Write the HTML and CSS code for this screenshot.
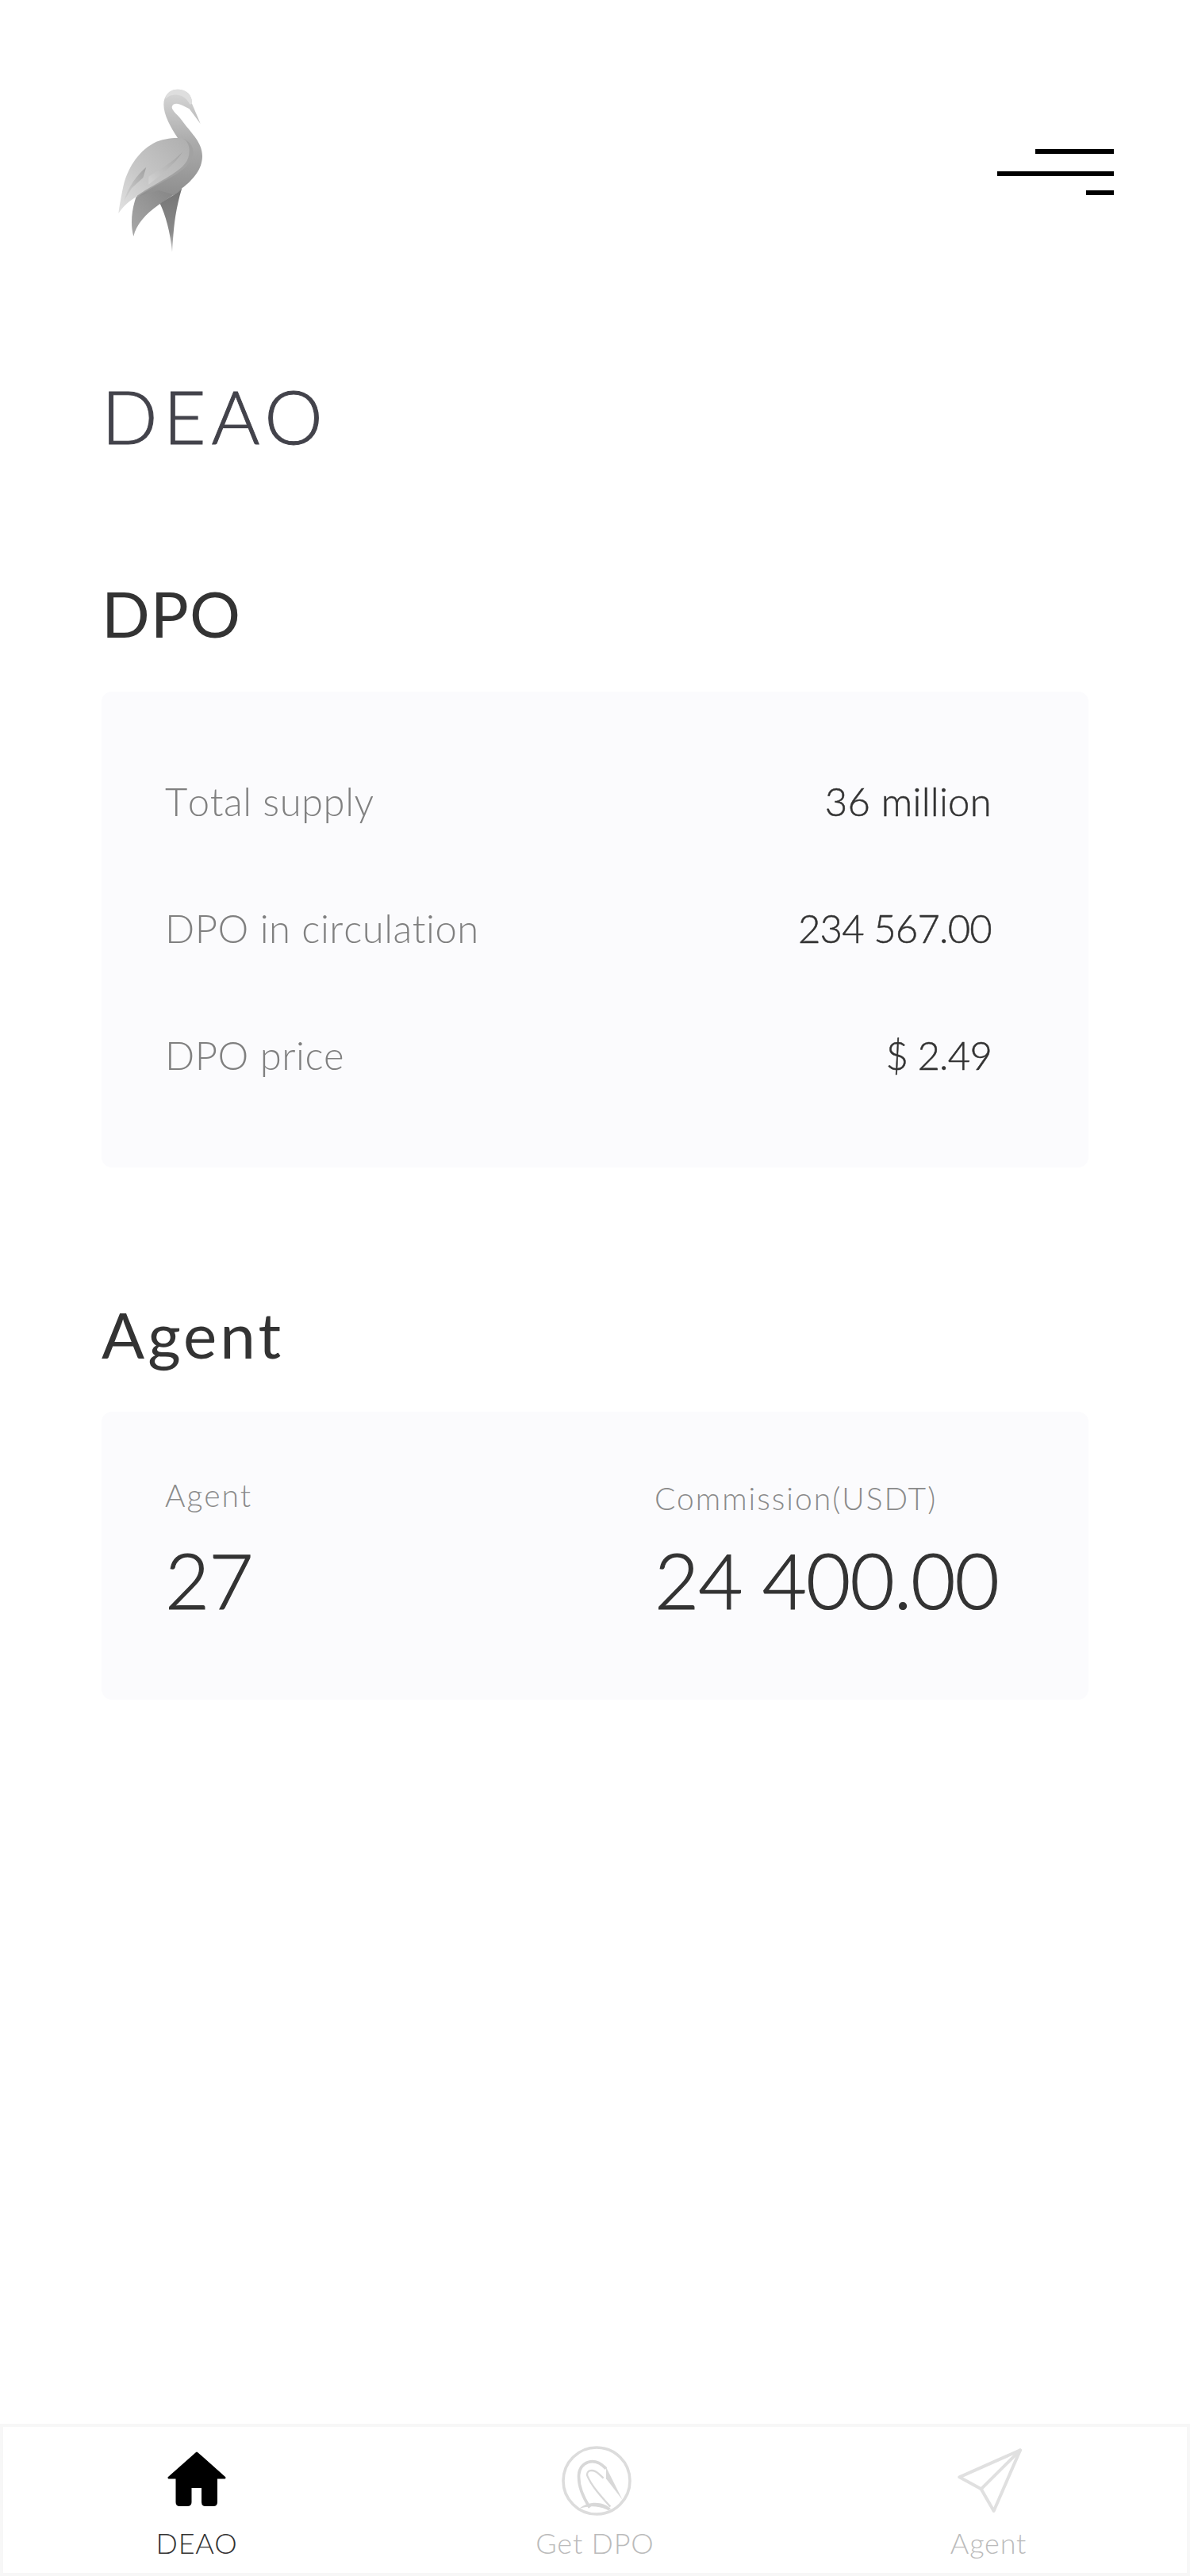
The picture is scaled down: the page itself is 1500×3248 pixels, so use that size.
FILE: index.html
```html
<!DOCTYPE html>
<html>
<head>
    <title>DEAO</title>
    <link rel="stylesheet" href="styles.css">
</head>
<body>
    <header class="header">
        <svg class="logo" viewBox="0 0 660 780">
            <defs>
                <linearGradient id="neck" x1="0" y1="0" x2="0" y2="1">
                    <stop offset="0" stop-color="#d8d8d8"/>
                    <stop offset="0.45" stop-color="#acacac"/>
                    <stop offset="1" stop-color="#8a8a8a"/>
                </linearGradient>
                <linearGradient id="wing" x1="1" y1="0" x2="0" y2="1">
                    <stop offset="0" stop-color="#aeaeae"/>
                    <stop offset="0.6" stop-color="#c8c8c8"/>
                    <stop offset="1" stop-color="#e2e2e2"/>
                </linearGradient>
                <linearGradient id="tail" x1="1" y1="0" x2="0" y2="1">
                    <stop offset="0" stop-color="#868686"/>
                    <stop offset="1" stop-color="#a8a8a8"/>
                </linearGradient>
                <linearGradient id="leg" x1="0" y1="0" x2="0" y2="1">
                    <stop offset="0" stop-color="#747474"/>
                    <stop offset="0.7" stop-color="#8a8a8a"/>
                    <stop offset="1" stop-color="#d0d0d0"/>
                </linearGradient>
                <linearGradient id="notch" x1="1" y1="0" x2="0" y2="1">
                    <stop offset="0" stop-color="#a0a0a0"/>
                    <stop offset="1" stop-color="#d4d4d4"/>
                </linearGradient>
            </defs>
            <path fill="url(#neck)" d="M372 98C340 98 319 122 319 155C319 195 345 240 372 282L300 400L218 505L300 530L345 505C360 495 375 490 388 472C430 440 465 400 465 350C465 300 425 265 395 225C375 195 350 180 350 165C352 150 372 148 392 160L416 172L458 228L426 152C428 120 405 98 372 98Z"/>
            <path fill="#dedede" d="M372 98C345 98 330 112 325 135C345 112 395 108 418 155L426 152C428 120 405 98 372 98Z"/>
            <path fill="url(#tail)" d="M215 505C198 550 192 610 205 654C215 610 250 570 300 535C320 520 345 505 352 495L300 480Z"/>
            <path fill="url(#leg)" d="M305 530C325 570 345 640 351 714C356 640 358 570 388 472C370 495 340 505 305 530Z"/>
            <path fill="#a2a2a2" d="M392 284C418 296 434 315 430 345C422 382 395 400 365 420C310 452 255 478 212 512L250 440L380 330Z"/>
            <path fill="url(#wing)" d="M392 284C370 280 320 282 280 302C220 335 180 400 165 470C158 505 152 535 148 567C170 535 190 520 212 506C240 480 310 448 360 413C390 393 416 372 416 330C416 310 408 292 392 284Z"/>
            <path fill="url(#notch)" d="M253 392L241 432L198 472L168 522C185 465 220 420 253 392Z"/>
            <path fill="url(#notch)" d="M390 335C358 385 310 420 262 458L262 428C305 400 350 375 390 335Z"/>
        </svg>
        <svg class="menu" viewBox="0 0 147 58">
            <rect x="48" y="0" width="99" height="6"/>
            <rect x="0" y="28" width="147" height="6"/>
            <rect x="112" y="52" width="35" height="6"/>
        </svg>
    </header>

    <main class="content">
        <h1 class="page-title">DEAO</h1>

        <h2 class="section-title first">DPO</h2>
        <div class="card list-card">
            <div class="row">
                <span class="row-label">Total supply</span>
                <span class="row-value">36 million</span>
            </div>
            <div class="row">
                <span class="row-label">DPO in circulation</span>
                <span class="row-value num">234 567.00</span>
            </div>
            <div class="row">
                <span class="row-label">DPO price</span>
                <span class="row-value num">$ 2.49</span>
            </div>
        </div>

        <h2 class="section-title second">Agent</h2>
        <div class="card stats-card">
            <div class="stat">
                <div class="stat-label">Agent</div>
                <div class="stat-value">27</div>
            </div>
            <div class="stat">
                <div class="stat-label low">Commission(USDT)</div>
                <div class="stat-value">24 400.00</div>
            </div>
        </div>
    </main>

    <nav class="tabbar">
        <a class="tab active">
            <svg class="tab-icon" viewBox="0 0 100 100">
                <path d="M50 11L15 42H85Z" stroke="#000" stroke-width="3" stroke-linejoin="round"/>
                <path d="M23.5 36V73Q23.5 78 28.5 78H38Q43.5 78 43.5 73V55H56V73Q56 78 61 78H71Q76 78 76 73V36Z"/>
            </svg>
            <span>DEAO</span>
        </a>
        <a class="tab">
            <svg class="tab-icon" viewBox="0 0 100 100">
                <circle cx="52" cy="46" r="42" fill="#fff" stroke="#dcdcdc" stroke-width="3.6"/>
                <g transform="translate(-60 -42) scale(0.3333)" fill="none" stroke="#d8d8d8">
                    <path stroke-width="11" d="M310 365C282 322 266 282 269 240C272 195 325 168 372 218"/>
                    <path stroke-width="7" d="M388 362C350 320 316 282 301 245C296 226 320 215 345 238L362 254"/>
                    <path fill="#d8d8d8" stroke="none" d="M372 212L434 336L372 256Z"/>
                    <path fill="#d8d8d8" stroke="none" d="M272 368C305 340 360 340 390 370L380 376C350 358 310 356 272 368Z"/>
                </g>
            </svg>
            <span>Get DPO</span>
        </a>
        <a class="tab">
            <svg class="tab-icon" viewBox="0 0 100 100">
                <g transform="translate(-56 -42) scale(0.3333)" fill="none" stroke="#e0e0e0" stroke-width="12" stroke-linecap="round" stroke-linejoin="round">
                    <path d="M438 148L208 250L290 295L338 378Z"/>
                    <path d="M290 295L438 148"/>
                </g>
            </svg>
            <span>Agent</span>
        </a>
    </nav>
</body>
</html>
```

FILE: styles.css
```css
* {
    box-sizing: border-box;
}

body {
    font-family: Lato, "Noto Sans", sans-serif;
    font-weight: 300;
    font-variant-ligatures: none;
    display: flex;
    flex-direction: column;
    width: 1500px;
    height: 3248px;
    margin: 0;
    background: #fff;
    color: #333;
    overflow: hidden;
}

.header {
    display: flex;
    justify-content: space-between;
    height: 340px;
    padding: 80px 96px 0 100px;
}

.logo {
    width: 220px;
    height: 260px;
}

.menu {
    width: 147px;
    height: 58px;
    margin-top: 108px;
}

.content {
    padding: 0 128px;
}

.page-title {
    margin: 134px 0 0;
    font-size: 93px;
    line-height: 100px;
    font-weight: 300;
    letter-spacing: 7px;
    color: #43434b;
    -webkit-text-stroke: 1px #43434b;
}

.section-title {
    font-size: 80px;
    line-height: 80px;
    font-weight: 400;
    color: #333;
}

.section-title.first {
    margin: 159px 0 59px;
    letter-spacing: 1px;
}

.section-title.second {
    margin: 170px 0 58px;
    letter-spacing: 4px;
}

.card {
    background: #fbfbfd;
    border-radius: 13px;
}

.list-card {
    padding: 58px 122px 62px 80px;
}

.row {
    display: flex;
    justify-content: space-between;
    align-items: center;
    height: 160px;
    font-size: 49px;
}

.row-label {
    font-kerning: none;
    letter-spacing: 0.5px;
    color: #808080;
}

.row-value {
    letter-spacing: 0.3px;
    color: #333;
    -webkit-text-stroke: 0.5px #333;
}

.row-value.num {
    letter-spacing: -0.8px;
}

.stats-card {
    display: grid;
    grid-template-columns: 617px 1fr;
    height: 363px;
    padding: 80px 0 0 80px;
}

.stat-label {
    height: 50px;
    font-size: 39px;
    line-height: 50px;
    letter-spacing: 2px;
    color: #8a8a8a;
}

.stat-label.low {
    padding-top: 4px;
}

.stat-value {
    margin-top: 32px;
    font-size: 97px;
    line-height: 100px;
    letter-spacing: -1px;
    color: #333;
    -webkit-text-stroke: 1.2px #333;
}

.tabbar {
    display: grid;
    grid-template-columns: 488px 516px 476px;
    height: 192px;
    margin-top: auto;
    border: 4px solid #f7f7f7;
}

.tab {
    display: flex;
    flex-direction: column;
    align-items: center;
    padding-top: 22px;
    font-size: 36px;
    line-height: 40px;
    letter-spacing: 0.8px;
    color: #bbb;
}

.tab.active {
    color: #333;
}

.tab-icon {
    width: 100px;
    height: 100px;
    margin-bottom: 4px;
}
```
